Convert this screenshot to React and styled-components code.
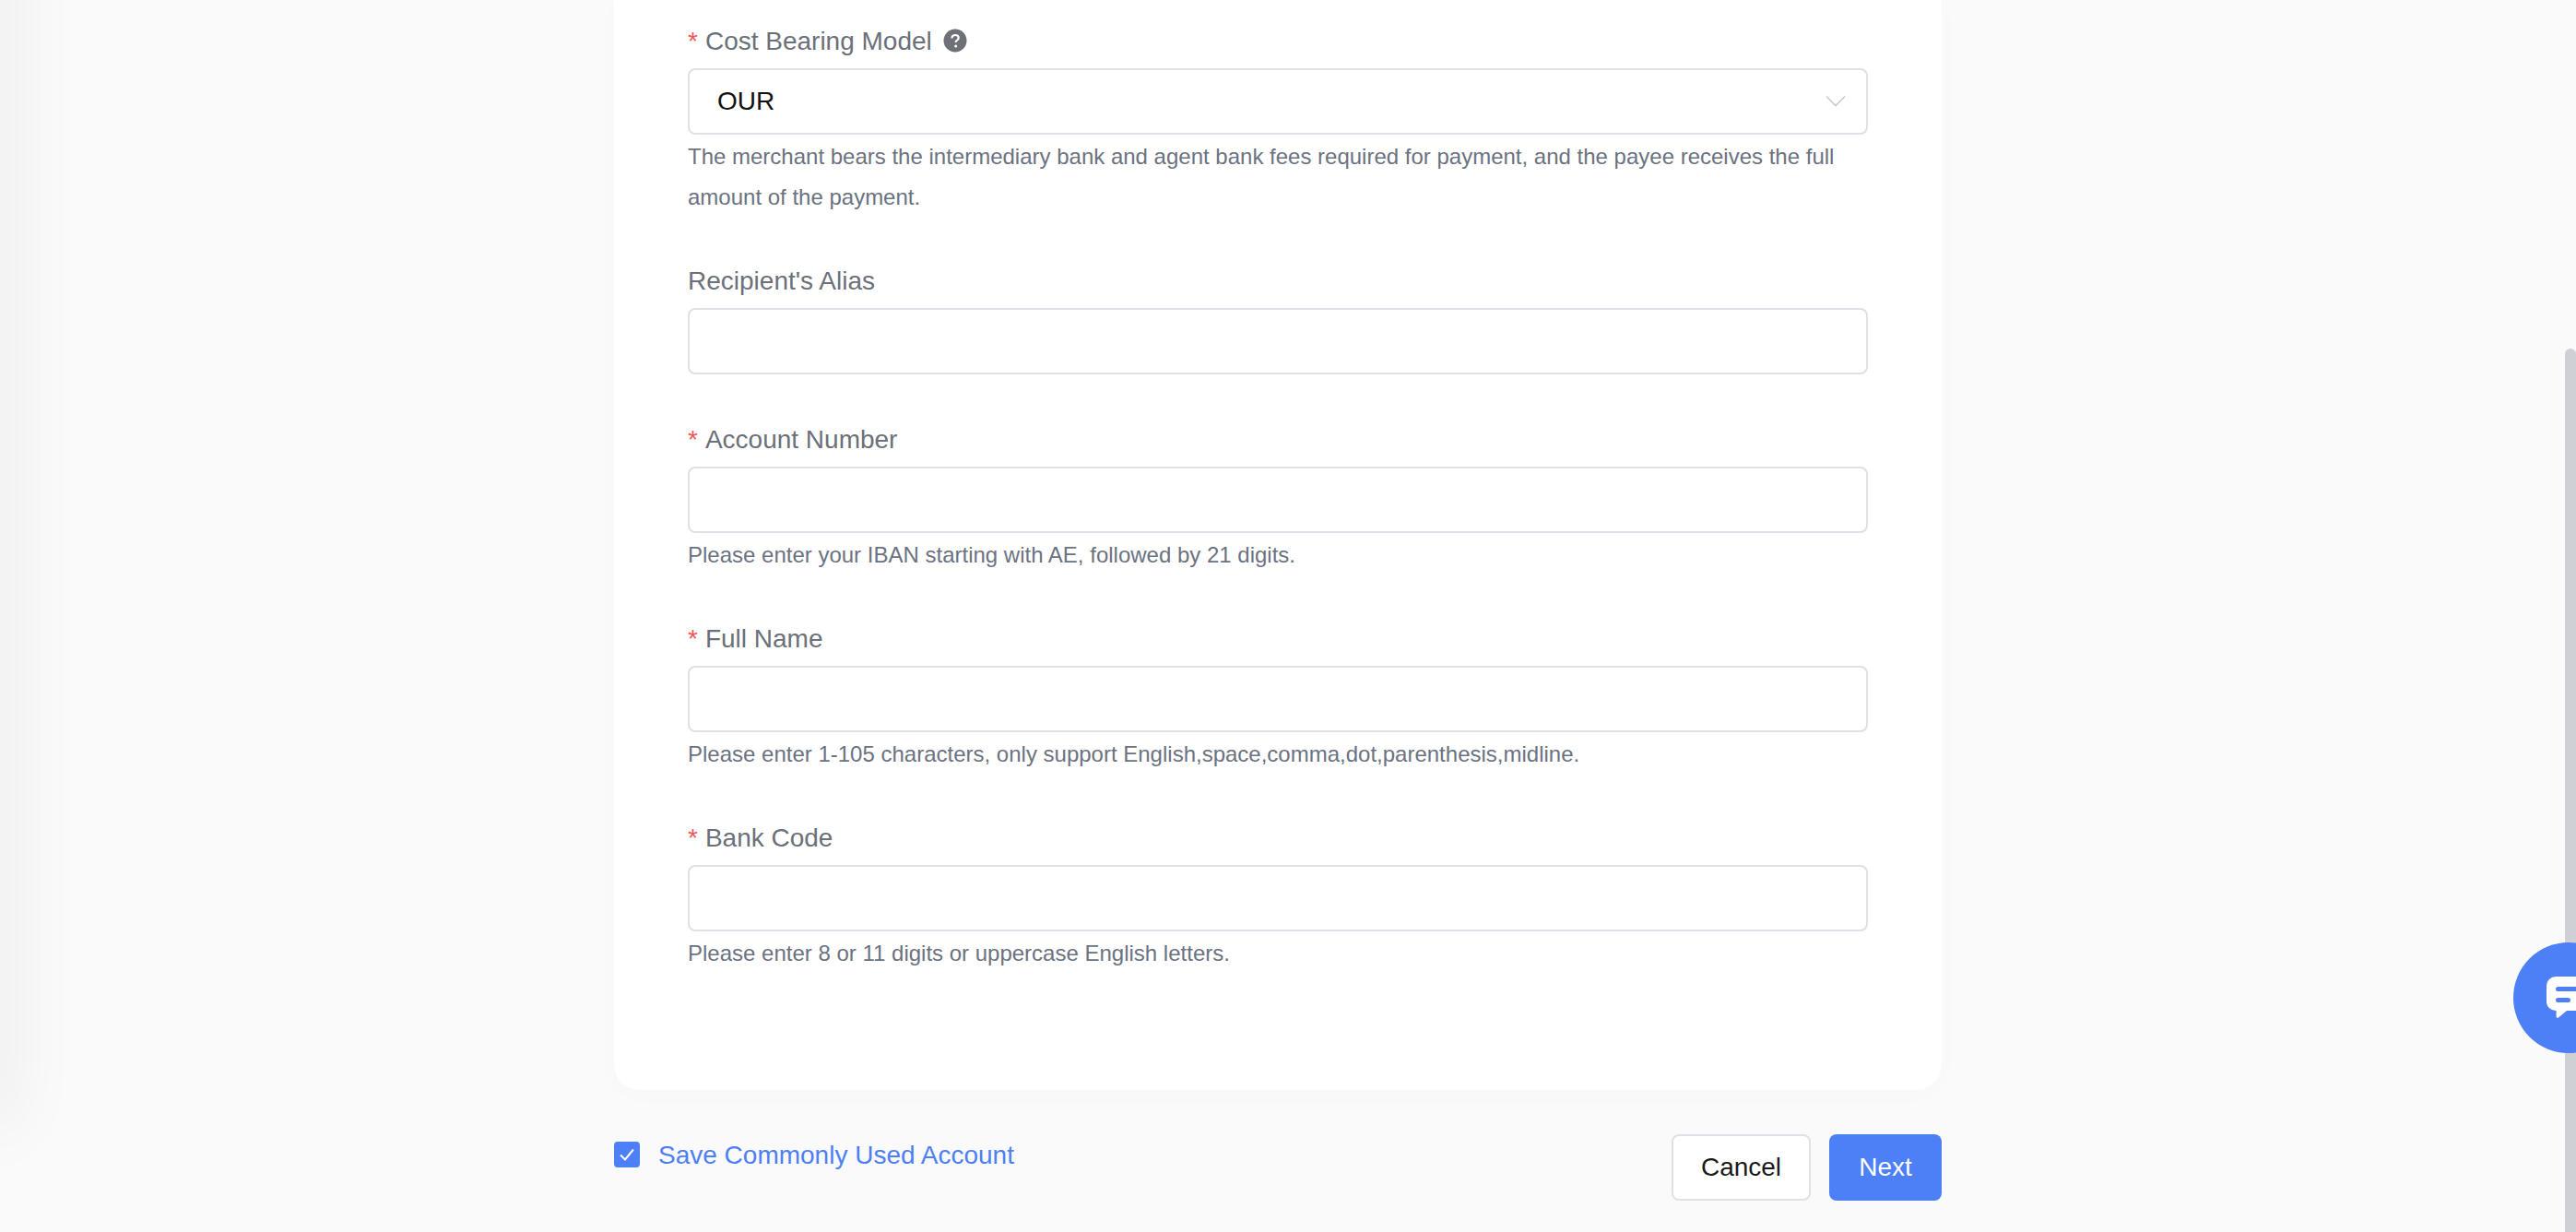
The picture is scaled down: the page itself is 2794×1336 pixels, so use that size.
import React from 'react';
import styled, { createGlobalStyle } from 'styled-components';

const GlobalStyle = createGlobalStyle`
  html, body {
    margin: 0;
    padding: 0;
    height: 100%;
    overflow: hidden;
    background: #fafafa;
  }
  * {
    box-sizing: border-box;
  }
  body {
    font-family: "Liberation Sans", Arial, sans-serif;
  }
`;

const Page = styled.div`
  position: relative;
  width: 2794px;
  height: 1336px;
  overflow: hidden;
  padding-left: 666px;
  background: #fafafa;
`;

const SideShadow = styled.div`
  position: absolute;
  left: -20px;
  top: -100px;
  width: 20px;
  height: 1320px;
  box-shadow: 0 0 76px rgba(0, 0, 0, 0.15);
`;

const Content = styled.div`
  width: 1440px;
`;

const Card = styled.div`
  background: #fff;
  border-radius: 0 0 28px 28px;
  box-shadow: 0 4px 32px rgba(0, 0, 0, 0.015);
  padding: 22px 80px 80px;
`;

const Field = styled.div`
  margin-bottom: 48px;
`;

const Label = styled.div`
  display: flex;
  align-items: center;
  height: 44px;
  padding-top: 2px;
  margin-bottom: 8px;
  font-size: 28px;
  color: #6b7079;
`;

const Star = styled.span`
  color: #f05a5a;
  margin-right: 8px;
`;

const HelpIcon = styled.svg`
  width: 26px;
  height: 26px;
  margin-left: 12px;
  margin-top: -2px;
  color: #6f7178;
`;

const TextInput = styled.input`
  display: block;
  width: 100%;
  height: 72px;
  padding: 0 30px;
  border: 2px solid #e0e0e6;
  border-radius: 8px;
  outline: none;
  background: #fff;
  font-family: inherit;
  font-size: 28px;
  color: #111;
`;

const Select = styled.div`
  display: flex;
  align-items: center;
  justify-content: space-between;
  height: 72px;
  padding: 0 22px 0 30px;
  border: 2px solid #e0e0e6;
  border-radius: 8px;
  font-size: 28px;
  color: #111;
`;

const Hint = styled.div`
  padding-top: 2px;
  margin-bottom: -2px;
  font-size: 24px;
  line-height: 44px;
  color: #6b7280;
`;

const Footer = styled.div`
  display: flex;
  justify-content: space-between;
  align-items: flex-start;
  padding-top: 48px;
`;

const SaveOption = styled.label`
  display: flex;
  align-items: center;
  height: 44px;
  gap: 20px;
  font-size: 28px;
  color: #4d80f6;
`;

const SaveText = styled.span`
  padding-top: 2px;
`;

const CheckBox = styled.span`
  display: flex;
  align-items: center;
  justify-content: center;
  width: 28px;
  height: 28px;
  border-radius: 4px;
  background: #4d80f6;
`;

const Buttons = styled.div`
  display: flex;
  gap: 20px;
`;

const Button = styled.button`
  height: 72px;
  width: ${(p) => (p.$primary ? '122px' : '151px')};
  border: ${(p) => (p.$primary ? 'none' : '2px solid #e0e0e6')};
  border-radius: 8px;
  background: ${(p) => (p.$primary ? '#4d80f6' : '#fff')};
  color: ${(p) => (p.$primary ? '#fff' : '#1a1a1a')};
  font-family: inherit;
  font-size: 28px;
`;

const ScrollThumb = styled.div`
  position: absolute;
  right: 0;
  top: 378px;
  bottom: 0;
  width: 12px;
  border-radius: 6px 6px 0 0;
  background: #cfd0d5;
`;

const ChatButton = styled.div`
  position: absolute;
  left: 2726px;
  top: 1022px;
  width: 120px;
  height: 120px;
  border-radius: 50%;
  background: #4d80f6;
  display: flex;
  align-items: center;
  justify-content: center;
`;

const fields = [
  { label: "Recipient's Alias" },
  { label: 'Account Number', required: true, hint: 'Please enter your IBAN starting with AE, followed by 21 digits.' },
  { label: 'Full Name', required: true, hint: 'Please enter 1-105 characters, only support English,space,comma,dot,parenthesis,midline.' },
  { label: 'Bank Code', required: true, hint: 'Please enter 8 or 11 digits or uppercase English letters.' },
];

export default function App() {
  return (
    <Page>
      <GlobalStyle />
      <SideShadow />
      <Content>
        <Card>
          <Field>
            <Label>
              <Star>*</Star>
              Cost Bearing Model
              <HelpIcon viewBox="0 0 26 26">
                <circle cx="13" cy="13" r="12.5" fill="currentColor" />
                <path
                  d="M9.4 10.4c0-2.1 1.6-3.4 3.7-3.4 2.1 0 3.6 1.2 3.6 3 0 1.3-.7 2-1.7 2.7-.9.6-1.3 1-1.3 2v.4"
                  fill="none"
                  stroke="#fff"
                  strokeWidth="2.2"
                />
                <circle cx="13.7" cy="19" r="1.5" fill="#fff" />
              </HelpIcon>
            </Label>
            <Select>
              OUR
              <svg width="22" height="14" viewBox="0 0 22 14">
                <path d="M1 1.5l10 10 10-10" fill="none" stroke="#c8cad0" strokeWidth="1.6" />
              </svg>
            </Select>
            <Hint>
              The merchant bears the intermediary bank and agent bank fees required for payment, and the payee receives the full amount of the payment.
            </Hint>
          </Field>
          {fields.map((f) => (
            <Field key={f.label}>
              <Label>
                {f.required && <Star>*</Star>}
                {f.label}
              </Label>
              <TextInput />
              {f.hint && <Hint>{f.hint}</Hint>}
            </Field>
          ))}
        </Card>
        <Footer>
          <SaveOption>
            <CheckBox>
              <svg width="18" height="16" viewBox="0 0 18 16">
                <path d="M2 8.5l5 5L16 2.5" fill="none" stroke="#fff" strokeWidth="2" />
              </svg>
            </CheckBox>
            <SaveText>Save Commonly Used Account</SaveText>
          </SaveOption>
          <Buttons>
            <Button>Cancel</Button>
            <Button $primary>Next</Button>
          </Buttons>
        </Footer>
      </Content>
      <ScrollThumb />
      <ChatButton>
        <svg width="48" height="46" viewBox="0 0 48 46">
          <path
            d="M10 0h28a10 10 0 0 1 10 10v17a10 10 0 0 1-10 10H22l-9 7.4c-1 .8-2.4.2-2.4-1V37A10 10 0 0 1 0 27V10A10 10 0 0 1 10 0z"
            fill="#fff"
          />
          <rect x="10" y="11" width="28" height="5" rx="2.5" fill="#4d80f6" />
          <rect x="10" y="23" width="16" height="5" rx="2.5" fill="#4d80f6" />
        </svg>
      </ChatButton>
    </Page>
  );
}
